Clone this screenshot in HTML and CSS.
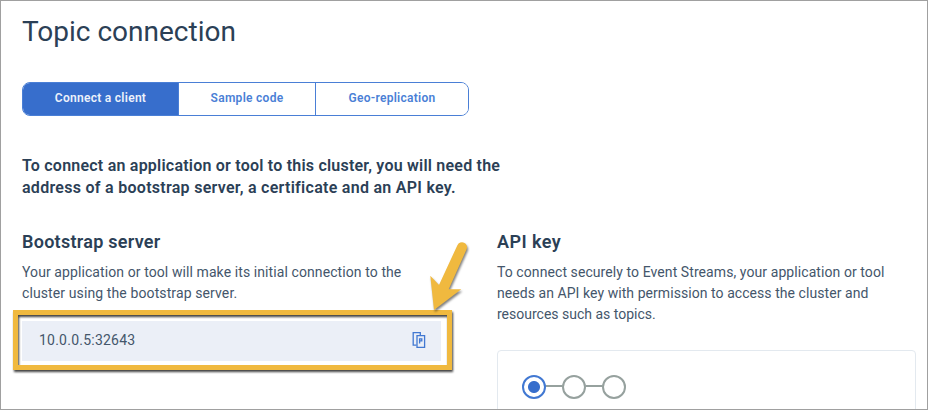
FILE: index.html
```html
<!DOCTYPE html>
<html lang="en">
<head>
<meta charset="utf-8">
<title>Topic connection</title>
<link rel="stylesheet" href="styles.css">
</head>
<body>
<main class="panel">
  <h1 class="title">Topic connection</h1>
  <nav class="tabs">
    <button class="tab tab-client active"><span>Connect a client</span></button>
    <button class="tab tab-sample"><span>Sample code</span></button>
    <button class="tab tab-geo"><span>Geo-replication</span></button>
  </nav>
  <p class="intro"><span class="line i1">To connect an application or tool to this cluster, you will need the</span><span class="line i2">address of a bootstrap server, a certificate and an API key.</span></p>
  <div class="columns">
    <section class="server">
      <h2><span class="h-server">Bootstrap server</span></h2>
      <p class="body"><span class="line b1">Your application or tool will make its initial connection to the</span><span class="line b2">cluster using the bootstrap server.</span></p>
      <div class="field">
        <span class="address">10.0.0.5:32643</span>
        <svg class="copy" width="14" height="18" viewBox="0 0 14 18" fill="none" stroke="#4178d2" stroke-width="1.3">
          <path d="M4.5 14.2H1.2V1.7H8.3V4.6"/>
          <path d="M5 4.6H12.6V16.3H5Z"/>
          <path d="M7.6 12.4V7.8H9.8V9.8H7.8"/>
        </svg>
        <div class="highlight"></div>
        <svg class="arrow" width="50" height="80" viewBox="425 238 50 80">
          <path fill="#f0b93f" d="M434 310L430.3 275.7L439 285L457.4 245.2A5 5 0 0 1 466.6 249.3L448.7 289.3H461.3Z"/>
        </svg>
      </div>
    </section>
    <section class="key">
      <h2><span class="h-key">API key</span></h2>
      <p class="body"><span class="line b3">To connect securely to Event Streams, your application or tool</span><span class="line b4">needs an API key with permission to access the cluster and</span><span class="line b5">resources such as topics.</span></p>
      <div class="card">
        <div class="steps">
          <i class="step current"></i><i class="link"></i><i class="step"></i><i class="link"></i><i class="step"></i>
        </div>
      </div>
    </section>
  </div>
</main>
</body>
</html>
```
FILE: styles.css
```css
* { box-sizing: border-box; }
body { margin: 0; background: #fff; font-family: Roboto, "Liberation Sans", sans-serif; color: #2b4056; }
h1, h2, p { margin: 0; }
.panel { height: 410px; overflow: hidden; border: 1px solid #a0a0a0; padding: 11px 11px 0 21px; }
.title { height: 40px; line-height: 40px; font-size: 28px; font-weight: 400; }
.tabs { display: flex; width: 447px; height: 34px; margin-top: 30px; border: 1px solid #4a7fd6; border-radius: 8px; overflow: hidden; }
.tab { border: 0; padding: 0 0 2px; background: #fff; color: #4a7fd6; font: 600 12px/30px Roboto, sans-serif; letter-spacing: 0.28px; text-align: center; }
.tab + .tab { border-left: 1px solid #4a7fd6; }
.tab-client { width: 155px; }
.tab-sample { width: 137px; }
.tab-geo { flex: 1; }
.tab.active { background: #376ecc; color: #edf2fb; }
.intro { margin-top: 39px; font-size: 16px; line-height: 22px; font-weight: 600; }
.line { display: block; white-space: nowrap; }
.i1 { letter-spacing: 0.22px; }
.i2 { letter-spacing: 0.28px; }
.columns { display: grid; grid-template-columns: 419px 419px; column-gap: 56px; margin-top: 31px; }
h2 { font-size: 18px; font-weight: 600; line-height: 24px; }
.h-server { letter-spacing: 0.27px; }
.h-key { letter-spacing: 0.45px; }
.body { margin-top: 8px; font-size: 14px; line-height: 21px; color: #44566b; }
.b1 { letter-spacing: 0.09px; }
.b2 { letter-spacing: 0.11px; }
.b3 { letter-spacing: 0.08px; }
.b4 { letter-spacing: 0.06px; }
.field { position: relative; display: flex; align-items: center; justify-content: space-between; height: 40px; margin-top: 17px; padding: 0 15px 2px 17px; background: #ebeff7; font-size: 14px; color: #44566b; }
.address { letter-spacing: 0.23px; }
.copy { display: block; }
.highlight { position: absolute; left: -9px; top: -11px; width: 439px; height: 60px; border: 5px solid #f0b93f; filter: drop-shadow(1px 2px 1px rgba(0, 0, 0, .75)); }
.arrow { position: absolute; left: 403px; top: -83px; filter: drop-shadow(1px 2px 1px rgba(0, 0, 0, .5)); }
.card { height: 120px; margin-top: 25px; padding: 24px; border: 1px solid #e3e9ef; border-radius: 4px; }
.steps { display: flex; align-items: center; }
.step { width: 24px; height: 24px; border: 2px solid #96a19e; border-radius: 50%; }
.step.current { border-color: #4178d2; background: radial-gradient(circle, #376ecc 5.5px, transparent 6.5px); }
.link { width: 16px; height: 2px; margin-top: -2px; background: #96a19e; }
```
